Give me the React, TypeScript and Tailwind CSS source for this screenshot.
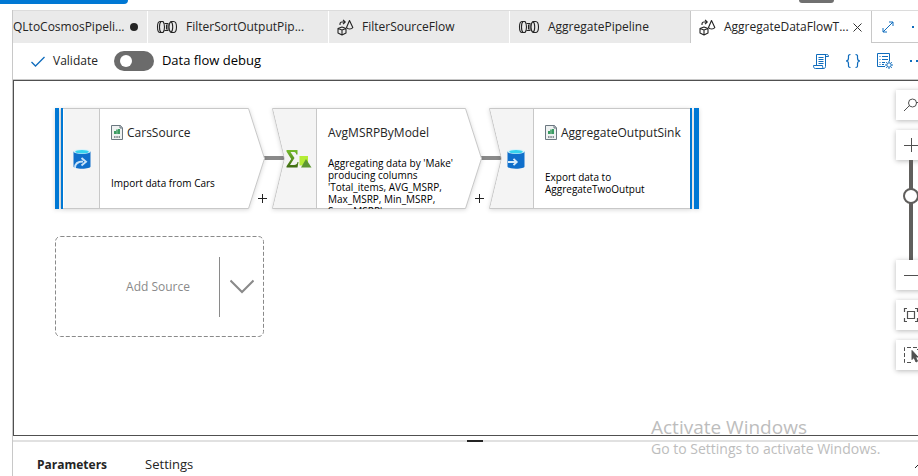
import type { ReactNode } from "react";

const ink = "#242424";
const blue = "#0f6cbd";

function PipelineIcon() {
  return (
    <svg width="22" height="14" viewBox="0 0 22 14" fill="none" stroke={ink} strokeWidth="1.1" className="shrink-0" aria-hidden="true">
      <path d="M5 1.500H4C2 1.500 1.500 4 1.500 7S2 12.500 4 12.500h1" />
      <path d="M5 1.500c-1.200 1-1.500 3-1.500 5.500s.3 4.500 1.500 5.500h2c1-1 1.500-3 1.500-5.500S8 2.500 7 1.500z" />
      <path d="M8.500 3.500h4M8.500 10.500h4M13 5h-2.500v4H13M10.500 7H13" />
      <path d="M15 1.500c-1.500 1-2 3-2 5.500s.5 4.500 2 5.500M15 1.500c1.300 1 1.700 3 1.700 5.500s-.4 4.500-1.700 5.500" />
      <path d="M15 1.500h2.500c2 0 3 2.500 3 5.500s-1 5.500-3 5.500H15" />
    </svg>
  );
}

function FlowIcon() {
  return (
    <svg width="17" height="17" viewBox="0 0 17 17" fill="none" stroke={ink} strokeWidth="1.1" strokeLinejoin="round" className="shrink-0" aria-hidden="true">
      <path d="M1 9.500l4-1.500 4 1.500v4.500L5 16l-4-2zM1 9.500L5 11l4-1.500M5 11v5" />
      <path d="M3 6V5c0-1.500.5-2 2-2h2.500M6 .8L8.200 3 6 5.200" />
      <path d="M12.500 1.500L9.500 8.500c1 2 5.300 2 6.300 0z" />
    </svg>
  );
}

function Tab({ icon, label, active, children }: { icon: ReactNode; label: string; active?: boolean; children?: ReactNode }) {
  return (
    <div
      className={
        active
          ? "-ml-px flex w-[182px] shrink-0 items-center gap-1 border-x border-[#c8c8c8] bg-white pl-2"
          : "flex w-[181px] shrink-0 items-center border-r border-white bg-[#eaeaea] pl-2"
      }
    >
      <button type="button" role="tab" aria-selected={!!active} className="flex items-center gap-2 whitespace-nowrap">
        {icon}
        <span>{label}</span>
      </button>
      {children}
    </div>
  );
}

function CsvIcon() {
  return (
    <svg width="12" height="15" viewBox="0 0 12 15" className="shrink-0" aria-hidden="true">
      <path d="M.5.500h9L11.500 3v11.500H.5z" fill="#eef1f1" stroke="#6b7780" />
      <path d="M9 .5V3h2.500" fill="none" stroke="#6b7780" />
      <path d="M3 6h2v3H3zM5.200 4.500h1.600V9H5.200zM7 4h2v5H7z" fill="#3a9b62" />
      <path d="M3 12h1.500M5.300 12h1.500M7.600 12H9" stroke="#68727a" strokeWidth="1.500" />
    </svg>
  );
}

function Database({ sink }: { sink?: boolean }) {
  return (
    <svg width="18" height="20" viewBox="0 0 18 20" aria-hidden="true">
      <path d="M.5 2.500v15c0 1.300 3.500 2.200 8.500 2.200s8.500-.9 8.500-2.200v-15z" fill="#0f6fcb" />
      <ellipse cx="9" cy="2.600" rx="8.500" ry="2.500" fill="#d9f3fb" />
      <ellipse cx="9" cy="2.800" rx="6.800" ry="1.700" fill="#34d3ee" />
      {sink ? (
        <path d="M1 13h8M6.500 9.800L9.800 13l-3.300 3.200" fill="none" stroke="#d8ecfa" strokeWidth="1.800" />
      ) : (
        <path d="M2 19c0-4 3-6.500 8-6.500M8.500 9l4.500 3.800-4.500 3.700" fill="none" stroke="#c9e3f8" strokeWidth="1.900" />
      )}
    </svg>
  );
}

function AggregateIcon() {
  return (
    <svg width="26" height="20" viewBox="0 0 26 20" aria-hidden="true">
      <defs>
        <linearGradient id="sigma" x1="0" y1="0" x2="0" y2="1">
          <stop offset="0" stopColor="#76bc2d" />
          <stop offset="1" stopColor="#3f6b12" />
        </linearGradient>
      </defs>
      <path d="M.5 1h11v4.500H10.300C10 3.500 9 3 7 3H4.500l4 6-4.500 7h4c2 0 3-.8 3.500-3H12.500L11.500 18.500H.5v-1.300L5.200 10 .5 2.500z" fill="url(#sigma)" />
      <path d="M13.500 7H22v9.500h-8.500z" fill="#b4ec36" />
      <path d="M20 10l5.500 8.500H15z" fill="#5c9631" />
    </svg>
  );
}

type Kind = "source" | "step" | "sink";

function NodeShape({ kind }: { kind: Kind }) {
  return (
    <svg width="212" height="101" viewBox="0 0 212 101" className="absolute inset-0 drop-shadow-sm" aria-hidden="true">
      {kind === "source" && (
        <>
          <path d="M6 .5h187.500L209.500 50.500 193.500 100.500H6z" fill="#fff" stroke="#c8c8c8" />
          <path d="M9 1h35v99H9z" fill="#f4f4f4" />
          <path d="M44.500 0v101" stroke="#c8c8c8" />
          <path d="M0 0h4v101H0zM6 0h2v101H6z" fill="#0078d4" />
        </>
      )}
      {kind === "step" && (
        <>
          <path d="M.5.5h193L209.500 50.500 193.500 100.500H.5l12-50z" fill="#fff" stroke="#c8c8c8" />
          <path d="M1.200 1H44v99H1.200l11.800-49.500z" fill="#f4f4f4" />
          <path d="M44.500 0v101" stroke="#c8c8c8" />
        </>
      )}
      {kind === "sink" && (
        <>
          <path d="M.5.5H202v100H.5l12-50z" fill="#fff" stroke="#c8c8c8" />
          <path d="M1.200 1H44v99H1.200l11.800-49.500z" fill="#f4f4f4" />
          <path d="M44.500 0v101" stroke="#c8c8c8" />
          <path d="M201 0h2v101h-2zM205 0h5v101h-5z" fill="#0078d4" />
        </>
      )}
    </svg>
  );
}

function FlowNode({ kind, place, title, text, icon, csv }: { kind: Kind; place: string; title: string; text: string; icon: ReactNode; csv?: boolean }) {
  return (
    <article className={`absolute top-[27px] h-[101px] w-[212px] ${place}`}>
      <NodeShape kind={kind} />
      <div className="relative flex h-full">
        <div className="flex w-[45px] items-center justify-center pl-2">{icon}</div>
        <div className="flex flex-1 flex-col overflow-hidden pl-[11px]">
          <h3 className="flex h-[49px] shrink-0 items-center gap-1 text-xs whitespace-nowrap">
            {csv && <CsvIcon />}
            {title}
          </h3>
          <div className={csv ? "flex h-[52px] items-center" : "h-[52px]"}>
            <p className="w-[132px] text-[10px] leading-3 text-black">{text}</p>
          </div>
        </div>
      </div>
    </article>
  );
}

function Tool({ label, children }: { label: string; children: ReactNode }) {
  return (
    <button type="button" aria-label={label} className="flex h-[30px] w-[30px] shrink-0 items-center justify-center bg-white shadow-[0_1px_5px_rgba(0,0,0,0.28)]">
      <svg width="16" height="16" viewBox="0 0 16 16" fill="none" stroke="#505050" aria-hidden="true">
        {children}
      </svg>
    </button>
  );
}

function AddStep({ place }: { place: string }) {
  return (
    <button type="button" aria-label="Add step" className={`absolute top-[113px] ${place}`}>
      <svg width="9" height="9" viewBox="0 0 9 9" stroke="#222" aria-hidden="true">
        <path d="M4.500 0v9M0 4.500h9" />
      </svg>
    </button>
  );
}

export default function App() {
  return (
    <div className="flex h-screen flex-col overflow-hidden bg-white font-['Open_Sans','Noto_Sans',sans-serif] text-xs text-[#242424]">
      <header className="flex h-[10px] shrink-0 items-start justify-between">
        <div className="h-1 w-32 rounded-br-sm bg-[#0078d4]" />
        <div className="mr-[84px] h-[3px] w-[35px] rounded-b-full bg-[#707070]" />
      </header>

      <main className="ml-3 flex min-h-0 flex-1 flex-col border-l border-[#c8c8c8]">
        <div className="flex h-[33px] shrink-0 border-t border-[#dcdcdc]" role="tablist">
          <div className="flex w-[135px] shrink-0 items-center justify-between border-r border-white bg-[#eaeaea] pr-[9px]">
            <button type="button" role="tab" aria-selected="false" className="whitespace-nowrap">
              QLtoCosmosPipeli...
            </button>
            <span className="h-2 w-2 rounded-full bg-[#242424]" />
          </div>
          <Tab icon={<PipelineIcon />} label="FilterSortOutputPip..." />
          <Tab icon={<FlowIcon />} label="FilterSourceFlow" />
          <Tab icon={<PipelineIcon />} label="AggregatePipeline" />
          <Tab icon={<FlowIcon />} label="AggregateDataFlowT..." active>
            <button type="button" aria-label="Close tab">
              <svg width="9" height="9" viewBox="0 0 9 9" stroke="#333" aria-hidden="true">
                <path d="M.5.5l8 8M8.500.5l-8 8" />
              </svg>
            </button>
          </Tab>
          <div className="flex flex-1 items-center gap-[18px] border-b border-[#c8c8c8] pl-[10px]">
            <button type="button" aria-label="Expand" className="shrink-0">
              <svg width="12" height="12" viewBox="0 0 12 12" fill="none" stroke={blue} aria-hidden="true">
                <path d="M1 11L11 1M7 1h4v4M1 7v4h4" />
              </svg>
            </button>
            <span className="h-[2px] w-[2px] shrink-0 bg-[#0f6cbd]" />
          </div>
        </div>

        <div className="flex h-[37px] shrink-0 items-center border-b border-[#c8c8c8] pl-[18px]">
          <button type="button" className="flex items-center gap-2">
            <svg width="14" height="11" viewBox="0 0 14 11" fill="none" stroke={blue} strokeWidth="1.300" aria-hidden="true">
              <path d="M.5 6L4.500 10 13.500 1" />
            </svg>
            Validate
          </button>
          <label className="ml-4 flex items-center gap-2 text-[13px] text-black">
            <input
              type="checkbox"
              role="switch"
              className="h-5 w-10 appearance-none rounded-full bg-[#6b6b6b] before:mt-1 before:ml-[6px] before:block before:h-3 before:w-3 before:rounded-full before:bg-white"
            />
            Data flow debug
          </label>
          <div className="ml-auto flex items-center gap-4">
            <button type="button" aria-label="Script">
              <svg width="16" height="16" viewBox="0 0 16 16" fill="none" stroke={blue} aria-hidden="true">
                <path d="M3.500 12.500v-11h10c1.500 0 2 .5 2 2h-3M12.500 1.500v12c0 1-.5 2-2 2h-8c-1.500 0-2-1-2-3h9c0 2 .5 3 1.500 3M5.500 4.500h5M5.500 6.500h5M5.500 8.500h5M5.500 10.500h5" />
              </svg>
            </button>
            <button type="button" aria-label="Code">
              <svg width="16" height="16" viewBox="0 0 16 16" fill="none" stroke={blue} strokeWidth="1.200" aria-hidden="true">
                <path d="M5.500 1.500C3 1.500 3.500 3 3.500 5S3 8 1 8c2 0 2.500 1 2.500 3s-.5 3.500 2 3.500M10.500 1.500c2.500 0 2 1.500 2 3.500s.5 3 2.500 3c-2 0-2.500 1-2.500 3s.5 3.500-2 3.500" />
              </svg>
            </button>
            <button type="button" aria-label="Properties">
              <svg width="17" height="16" viewBox="0 0 17 16" fill="none" stroke={blue} aria-hidden="true">
                <path d="M8 13.500H.5V.5h12V8M2.500 3.500h1M5 3.500h6M2.500 6.500h1M5 6.500h6M2.500 9.500h1M5 9.500h3M2.500 11.500h1M5 11.500h2" />
                <circle cx="12" cy="12" r="2.200" />
                <path d="M12 8v1.500M12 14.500V16M8 12h1.500M14.500 12H16M9.200 9.200l1 1M13.800 13.800l1 1M14.800 9.200l-1 1M9.200 14.800l1-1" />
              </svg>
            </button>
            <button type="button" aria-label="More" className="flex gap-1">
              <span className="h-[2px] w-[2px] bg-[#0f6cbd]" />
              <span className="h-[2px] w-[2px] bg-[#0f6cbd]" />
            </button>
          </div>
        </div>

        <section aria-label="Data flow" className="relative mb-1 min-h-0 flex-1 overflow-hidden border-y border-l border-[#505050]">
          <div className="absolute top-[75px] left-[250px] h-1 w-5 bg-[#8a8a8a]" />
          <div className="absolute top-[75px] left-[467px] h-1 w-5 bg-[#8a8a8a]" />
          <FlowNode kind="source" place="left-[41px]" title="CarsSource" text="Import data from Cars" icon={<Database />} csv />
          <FlowNode
            kind="step"
            place="left-[258px]"
            title="AvgMSRPByModel"
            text="Aggregating data by 'Make' producing columns 'Total_items, AVG_MSRP, Max_MSRP, Min_MSRP, Sum_MSRP'"
            icon={<AggregateIcon />}
          />
          <FlowNode kind="sink" place="left-[475px]" title="AggregateOutputSink" text="Export data to AggregateTwoOutput" icon={<Database sink />} csv />
          <AddStep place="left-[244px]" />
          <AddStep place="left-[461px]" />

          <button type="button" className="absolute top-[155px] left-[41px] flex h-[101px] w-[209px] items-center justify-end rounded-md text-[#8a8a8a]">
            <svg className="absolute inset-0 h-full w-full" fill="none" stroke="#8a8a8a" aria-hidden="true">
              <rect x="0.500" y="0.500" width="208" height="100" rx="5" strokeDasharray="4 2" />
            </svg>
            <span className="pr-[29px]">Add Source</span>
            <span className="flex h-[60px] items-center border-l border-[#8a8a8a] px-[10px]">
              <svg width="24" height="15" viewBox="0 0 24 15" fill="none" stroke="#8a8a8a" strokeWidth="2" aria-hidden="true">
                <path d="M.5 1.500L12 13 23.500 1.500" />
              </svg>
            </span>
          </button>

          <div className="absolute top-[9px] -right-2 flex w-[30px] flex-col items-center">
            <Tool label="Search">
              <circle cx="9.500" cy="6" r="4" />
              <path d="M6.500 8.500L1 14M13 5.500h3" />
            </Tool>
            <div className="mt-[10px] flex flex-col items-center">
              <Tool label="Zoom in">
                <path d="M8.500 1v14M1 8.500h15" />
              </Tool>
              <input
                type="range"
                aria-label="Zoom"
                defaultValue={67}
                className="h-[100px] w-4 appearance-none bg-transparent [direction:rtl] [writing-mode:vertical-lr] [&::-webkit-slider-runnable-track]:h-full [&::-webkit-slider-runnable-track]:w-1 [&::-webkit-slider-runnable-track]:bg-[#605e5c] [&::-webkit-slider-thumb]:-ml-[6px] [&::-webkit-slider-thumb]:h-4 [&::-webkit-slider-thumb]:w-4 [&::-webkit-slider-thumb]:appearance-none [&::-webkit-slider-thumb]:rounded-full [&::-webkit-slider-thumb]:border-2 [&::-webkit-slider-thumb]:border-[#605e5c] [&::-webkit-slider-thumb]:bg-white"
              />
              <Tool label="Zoom out">
                <path d="M1 8.500h15" />
              </Tool>
            </div>
            <div className="mt-[10px] flex flex-col gap-[10px]">
              <Tool label="Fit to screen">
                <path d="M4 1.500H1.500V5M12 1.500h2.500V5M4 14.500H1.500V11M12 14.500h2.500V11M4.500 4.500h7v7h-7z" strokeWidth="1.200" />
              </Tool>
              <Tool label="Select area">
                <path d="M8 .5H1.500v15H8M10 .5h4.500V3" strokeDasharray="4 2" />
                <path d="M9 3.500v9l2-2 2 4.500 1.500-.8-2-4.200H15z" fill="#505050" />
              </Tool>
            </div>
          </div>
        </section>

        <div className="flex h-[2px] shrink-0 justify-center bg-[#e1e1e1] pl-[18px]">
          <span className="h-[2px] w-4 bg-[#242424]" />
        </div>
        <footer className="flex h-[34px] shrink-0 items-center pt-3 pl-6">
          <div role="tablist" className="flex items-center gap-[38px]">
            <button type="button" role="tab" aria-selected="true" className="font-bold">
              Parameters
            </button>
            <button type="button" role="tab" aria-selected="false" className="text-[13px]">
              Settings
            </button>
          </div>
          <button type="button" aria-label="Collapse panel" className="-mr-2 ml-auto">
            <svg width="12" height="8" viewBox="0 0 12 8" fill="none" stroke="#222" aria-hidden="true">
              <path d="M1 7l5-5 5 5" />
            </svg>
          </button>
        </footer>
      </main>

      <aside className="pointer-events-none absolute right-[31px] bottom-[19px] w-[236px] text-[#bdbdbd]">
        <p className="text-[19px] leading-7">Activate Windows</p>
        <p className="text-sm leading-4 whitespace-nowrap">Go to Settings to activate Windows.</p>
      </aside>
    </div>
  );
}
